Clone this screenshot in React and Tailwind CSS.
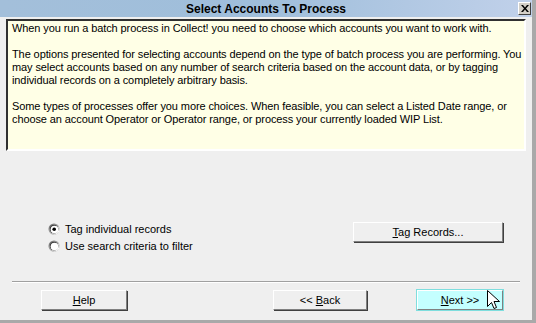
import React from 'react';

// Win9x-style 3D button
function Btn({ children, className = '' }) {
  return (
    <div
      className={
        'flex h-[20px] items-center justify-center border border-t-white border-l-white border-r-[#808080] border-b-[#808080] shadow-[1px_1px_0_#404040] text-[11px] text-black ' +
        className
      }
    >
      {children}
    </div>
  );
}

function Radio({ checked }) {
  return (
    <svg width="12" height="12" viewBox="0 0 12 12" className="shrink-0">
      <circle cx="6" cy="6" r="5.5" fill="#808080" />
      <circle cx="6.5" cy="6.5" r="5" fill="#ffffff" />
      <circle cx="6" cy="6" r="4.5" fill="#404040" />
      <circle cx="6.5" cy="6.5" r="3.8" fill="#ececec" />
      <circle cx="6.5" cy="6.5" r="3.6" fill="#ffffff" />
      {checked && <circle cx="6.2" cy="6.2" r="1.8" fill="#000" />}
    </svg>
  );
}

export default function App() {
  return (
    <div className="relative w-[536px] h-[323px] overflow-hidden bg-[#efefef] font-['Liberation_Sans',Arial,sans-serif] border-r-4 border-b-[3px] border-[#a9a9a9]">
      {/* Title bar */}
      <div className="relative flex h-[17px] items-center justify-center bg-gradient-to-r from-[#a3bfda] via-[#9fbedb] to-[#c1d1ea]">
        <span className="text-[12px] font-bold text-black leading-none">Select Accounts To Process</span>
        <div className="absolute right-[1px] top-[2px] flex h-[13px] w-[13px] items-center justify-center bg-[#d4d0c8] border border-t-white border-l-white border-r-[#404040] border-b-[#404040]">
          <svg width="8" height="7" viewBox="0 0 8 7">
            <path d="M0 0h2l2 2.5L6 0h2L5 3.5 8 7H6L4 4.5 2 7H0l3-3.5z" fill="#000" />
          </svg>
        </div>
      </div>

      {/* Info text */}
      <div className="mx-[6px] mt-[2px] h-[132px] border-2 border-t-[#303030] border-l-[#303030] border-r-white border-b-white">
        <div className="h-full bg-[#ffffe6] px-[4px] pt-[1px] text-[11px] leading-[13px] text-black tracking-[-0.1px]">
          <p className="whitespace-nowrap">When you run a batch process in Collect! you need to choose which accounts you want to work with.</p>
          <p className="mt-[13px] whitespace-nowrap">
            The options presented for selecting accounts depend on the type of batch process you are performing. You
            <br />
            may select accounts based on any number of search criteria based on the account data, or by tagging
            <br />
            individual records on a completely arbitrary basis.
          </p>
          <p className="mt-[13px] whitespace-nowrap">
            Some types of processes offer you more choices. When feasible, you can select a Listed Date range, or
            <br />
            choose an account Operator or Operator range, or process your currently loaded WIP List.
          </p>
        </div>
      </div>

      {/* Options */}
      <div className="mt-[72px] flex items-start">
        <div className="ml-[48px] flex flex-col gap-[5px] text-[11px] text-black">
          <div className="flex items-center gap-[5px] h-[12px]">
            <Radio checked />
            <span>Tag individual records</span>
          </div>
          <div className="flex items-center gap-[5px] h-[12px]">
            <Radio />
            <span>Use search criteria to filter</span>
          </div>
        </div>
        <Btn className="ml-auto mr-[29px] mt-[-1px] w-[150px]">
          <span><u>T</u>ag Records...</span>
        </Btn>
      </div>

      {/* Separator */}
      <div className="mx-[12px] mt-[29px] h-[2px] border-t border-t-[#a0a0a0] border-b border-b-white" />

      {/* Bottom buttons */}
      <div className="mt-[7px] flex items-center">
        <Btn className="ml-[41px] w-[86px]">
          <span><u>H</u>elp</span>
        </Btn>
        <Btn className="ml-[146px] w-[94px]">
          <span>&lt;&lt; <u>B</u>ack</span>
        </Btn>
        <Btn className="ml-[50px] w-[86px] bg-[#c4ffff] outline outline-1 outline-[#7fdede]">
          <span><u>N</u>ext &gt;&gt;</span>
        </Btn>
      </div>

      {/* Mouse cursor */}
      <svg className="absolute left-[487px] top-[290px]" width="14" height="22" viewBox="0 0 14 22">
        <path
          d="M0.5 0.5 V16.5 L4.5 12.5 L7 18.5 L9.5 17.5 L7 11.5 H12.5 Z"
          fill="#fff"
          stroke="#000"
          strokeWidth="1"
          strokeLinejoin="miter"
        />
      </svg>
    </div>
  );
}
